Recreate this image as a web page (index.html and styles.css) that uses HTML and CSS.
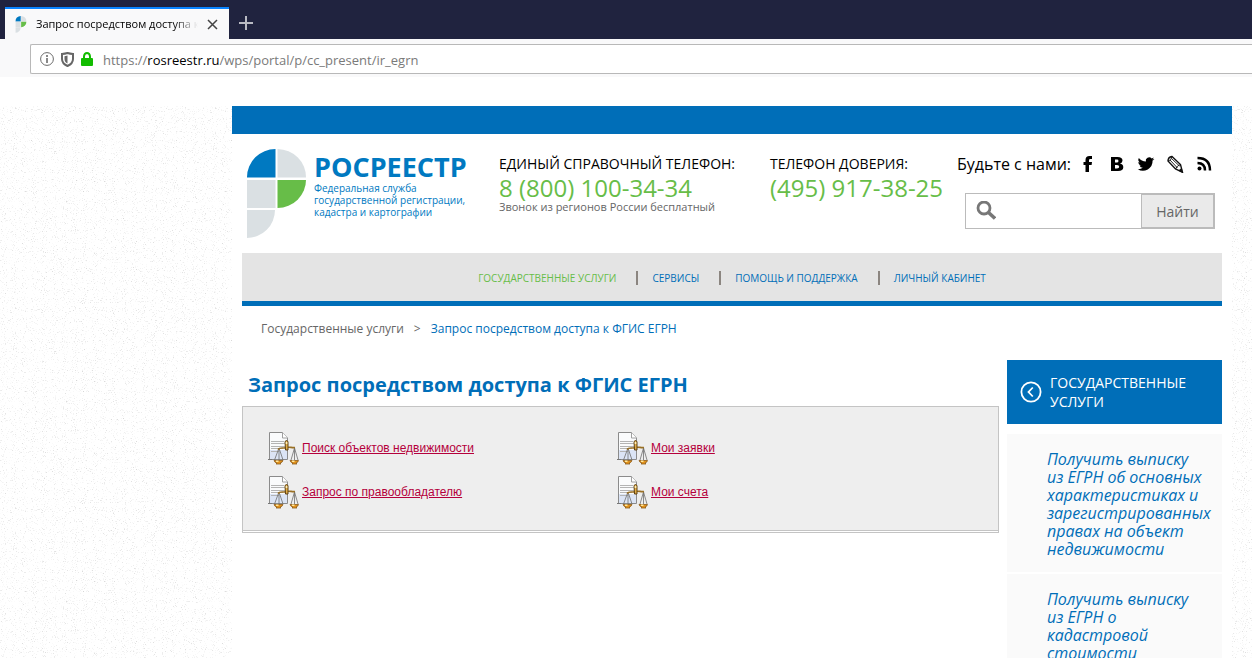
FILE: index.html
```html
<!DOCTYPE html>
<html lang="ru">
<head>
<meta charset="utf-8">
<title>Запрос посредством доступа к ФГИС ЕГРН</title>
<link rel="stylesheet" href="styles.css">
</head>
<body>
<svg class="defs" width="0" height="0" aria-hidden="true">
  <symbol id="doc" viewBox="0 0 32 33">
    <path d="M2.500 .5H15.500L20.500 6V27.500H2.500Z" fill="#fafbfc" stroke="#8b8b8b"/>
    <path d="M3 18H20V27H3Z" fill="#dbe4f5"/>
    <path d="M15.500 .5V6H20.500" fill="#fff" stroke="#a0a0a0"/>
    <path d="M4 9.500H17M4 11.500H18M4 14.500H18M4 16.500H16M4 19.500H12" stroke="#b4b4b4"/>
    <path d="M12 16L7.500 28M12 16L16 28M12 16V28M27.500 16L24 28M27.500 16L31 28M27.500 16V28" fill="none" stroke="#6f6f6f" stroke-width=".8"/>
    <path d="M11 17.500C13 14.500 17 17 20 15.500C22 14.500 25 16 28 15.500" fill="none" stroke="#9a7024" stroke-width="1.600"/>
    <path d="M18 9.500Q19.500 7.500 21 9.500V18H18.500Z" fill="#e0ac45" stroke="#5c4016"/>
    <circle cx="19.500" cy="11" r="1" fill="#fff3c8"/>
    <path d="M1 27.500H5" stroke="#777"/>
    <path d="M7 28.500H16Q15.500 30.500 13 31L14 32H9L10 31Q7.500 30.500 7 28.500ZM23 28.500H31.500Q31 30.500 29 31L30 32H25L26 31Q23.500 30.500 23 28.500Z" fill="#e2921b" stroke="#8a5a1a" stroke-width=".8"/>
    <path d="M9 29.300H11.500M25 29.300H27.500" stroke="#ffe79a" stroke-width="1.400"/>
  </symbol>
  <symbol id="brand" viewBox="0 0 60 90">
    <path d="M0 28.500V28A29 28 0 0 1 28.500 0V28.500Z" fill="#0079c1"/>
    <path d="M30.500 0A29 28 0 0 1 59 28.500H30.500Z" fill="#dae0e3"/>
    <path d="M0 31H28.500V59H0ZM0 61H28A28 28 0 0 1 0 89Z" fill="#dae0e3"/>
    <path d="M30.500 31H59A29 28 0 0 1 30.500 59Z" fill="#67bd48"/>
  </symbol>
</svg>

<div class="tabs">
  <div class="tab">
    <svg class="favicon" viewBox="0 0 60 90" width="12" height="17"><use href="#brand"/></svg>
    <span class="tab-title">Запрос посредством доступа к</span>
    <button class="tab-close" aria-label="Закрыть"><svg width="11" height="11" viewBox="0 0 11 11"><path d="M1 1L10 10M10 1L1 10" stroke="#444" stroke-width="1.500"/></svg></button>
  </div>
  <button class="tab-new" aria-label="Новая вкладка"><svg width="14" height="14" viewBox="0 0 14 14"><path d="M7 0V14M0 7H14" stroke="#b9bac3" stroke-width="2"/></svg></button>
</div>
<div class="toolbar">
  <div class="address">
    <svg width="14" height="14" viewBox="0 0 14 14"><circle cx="7" cy="7" r="6.400" fill="none" stroke="#6b6b6b"/><path d="M7 3V5M7 6V11" stroke="#6b6b6b" stroke-width="1.600"/></svg>
    <svg width="13" height="15" viewBox="0 0 13 15"><path d="M1 2Q4 1.800 6.500 1Q9 1.800 12 2V7Q12 11.500 6.500 14Q1 11.500 1 7Z" fill="none" stroke="#666" stroke-width="2"/><path d="M6.500 3.500V11.500Q3.500 10 3.500 7V4.200Z" fill="#666"/></svg>
    <svg width="12" height="14" viewBox="0 0 12 14"><path d="M3 7V4.500A3 3.500 0 0 1 9 4.500V7" fill="none" stroke="#12bc00" stroke-width="2"/><rect y="6" width="12" height="8" rx="1" fill="#12bc00"/></svg>
    <span class="url">https://<b>rosreestr.ru</b>/wps/portal/p/cc_present/ir_egrn</span>
  </div>
</div>

<div class="canvas">
  <div class="page">
    <div class="strip"></div>
    <header class="header">
      <a class="logo" href="#">
        <svg viewBox="0 0 60 90" width="60" height="90"><use href="#brand"/></svg>
        <span class="logo-text"><strong>РОСРЕЕСТР</strong><small>Федеральная служба<br>государственной регистрации,<br>кадастра и картографии</small></span>
      </a>
      <div class="phone phone-main">
        <div class="phone-label">ЕДИНЫЙ СПРАВОЧНЫЙ ТЕЛЕФОН:</div>
        <div class="phone-number">8 (800) 100-34-34</div>
        <div class="phone-note">Звонок из регионов России бесплатный</div>
      </div>
      <div class="phone phone-trust">
        <div class="phone-label">ТЕЛЕФОН ДОВЕРИЯ:</div>
        <div class="phone-number">(495) 917-38-25</div>
      </div>
      <div class="contact">
        <div class="social">
          <span>Будьте с нами:</span>
          <a href="#" aria-label="Facebook"><svg width="18" height="18" viewBox="0 0 18 18"><path d="M6.500 17V10H4.500V7H6.500V5Q6.500 1 10.500 1H13V4H11.300Q10 4 10 5.300V7H13L12.600 10H10V17Z"/></svg></a>
          <a href="#" aria-label="ВКонтакте"><svg width="18" height="18" viewBox="0 0 18 18"><path fill-rule="evenodd" d="M3 2H9.500Q14.500 2 14.500 5.500Q14.500 7.800 12 8.600Q15.300 9.300 15.300 12.200Q15.300 16 10 16H3ZM7 4.600V7.500H8.800Q10.500 7.500 10.500 6T8.800 4.600ZM7 10.100V13.400H9Q11.200 13.400 11.200 11.800T9 10.100Z"/></svg></a>
          <a href="#" aria-label="Twitter"><svg width="18" height="18" viewBox="-1 0 26 24"><path d="M24 4.600a10 10 0 0 1-2.800.8 5 5 0 0 0 2.100-2.700c-1 .6-2 1-3.100 1.200a4.900 4.900 0 0 0-8.400 4.500C7.700 8.200 4.100 6.300 1.700 3.200a4.900 4.900 0 0 0 1.500 6.500 5 5 0 0 1-2.200-.6 4.900 4.900 0 0 0 3.900 4.900 5 5 0 0 1-2.200.1 4.900 4.900 0 0 0 4.600 3.400A10 10 0 0 1 0 19.500 14 14 0 0 0 21.500 7.100 10 10 0 0 0 24 4.600Z"/></svg></a>
          <a href="#" aria-label="LiveJournal"><svg width="18" height="18" viewBox="0 0 18 18" fill="none" stroke="#111"><path stroke-width="1.400" d="M2 6Q2 2 6 1.500L14.500 9.500L16.500 17.300L9.500 14Z"/><path stroke-width=".9" d="M2 6Q5.500 5.500 6 1.500M4 5L11.500 13M5.500 3.500L13.500 11M9.500 14Q11 10.500 14.500 9.500"/><path d="M13 15.500L16 17L15.500 13.500Z" fill="#111"/></svg></a>
          <a href="#" aria-label="RSS"><svg width="18" height="18" viewBox="0 0 18 18"><circle cx="4.500" cy="13.500" r="2"/><path d="M2.500 8Q10 8 10 15.500M2.500 3Q15 3 15 15.500" fill="none" stroke="#000" stroke-width="2.500"/></svg></a>
        </div>
        <form class="search">
          <svg width="20" height="20" viewBox="0 0 20 20"><circle cx="8" cy="7" r="6" fill="none" stroke="#777" stroke-width="2.800"/><path d="M12.500 11.500L19 17.500" stroke="#777" stroke-width="3.500"/></svg>
          <input type="text" aria-label="Поиск">
          <button type="button">Найти</button>
        </form>
      </div>
    </header>

    <nav class="menu">
      <a class="current" href="#">ГОСУДАРСТВЕННЫЕ УСЛУГИ</a>
      <a href="#">СЕРВИСЫ</a>
      <a href="#">ПОМОЩЬ И ПОДДЕРЖКА</a>
      <a href="#">ЛИЧНЫЙ КАБИНЕТ</a>
    </nav>
    <div class="crumbs"><a href="#">Государственные услуги</a><span>&gt;</span><a class="here" href="#">Запрос посредством доступа к ФГИС ЕГРН</a></div>

    <div class="columns">
      <main class="content">
        <h1>Запрос посредством доступа к ФГИС ЕГРН</h1>
        <div class="panel">
          <div class="services">
            <a href="#"><svg width="32" height="33"><use href="#doc"/></svg><span>Поиск объектов недвижимости</span></a>
            <a href="#"><svg width="32" height="33"><use href="#doc"/></svg><span>Мои заявки</span></a>
            <a href="#"><svg width="32" height="33"><use href="#doc"/></svg><span>Запрос по правообладателю</span></a>
            <a href="#"><svg width="32" height="33"><use href="#doc"/></svg><span>Мои счета</span></a>
          </div>
        </div>
      </main>
      <aside class="side">
        <a class="side-head" href="#">
          <svg width="22" height="22" viewBox="0 0 22 22" fill="none" stroke="#fff" stroke-width="1.800"><circle cx="11" cy="11" r="9.600"/><path d="M12.800 6.500L8.500 11L12.800 15.500"/></svg>
          <span>ГОСУДАРСТВЕННЫЕ УСЛУГИ</span>
        </a>
        <a class="side-item" href="#">Получить выписку<br>из ЕГРН об основных<br>характеристиках и<br>зарегистрированных<br>правах на объект<br>недвижимости</a>
        <a class="side-item" href="#">Получить выписку<br>из ЕГРН о<br>кадастровой<br>стоимости</a>
      </aside>
    </div>
  </div>
</div>
</body>
</html>
```
FILE: styles.css
```css
* { box-sizing: border-box; }
body {
  margin: 0;
  height: 100vh;
  overflow: hidden;
  display: flex;
  flex-direction: column;
  background: #fff;
  color: #000;
  font-family: "Open Sans", "Noto Sans", sans-serif;
  font-size: 14px;
}
a { color: #006eb8; text-decoration: none; }
button { font-family: inherit; border: 0; background: none; padding: 0; }
svg { flex: none; display: block; }
.defs { position: absolute; }

.tabs { display: flex; flex: none; height: 39px; padding: 7px 0 0 5px; background: #20233f; }
.tab { display: flex; align-items: center; width: 224px; padding: 0 11px 0 10px; background: #f9f9fa; border-top: 2px solid #0a84ff; }
.tab-title {
  flex: 1;
  margin: 0 9px;
  padding-bottom: 1px;
  overflow: hidden;
  white-space: nowrap;
  font-size: 11px;
  mask-image: linear-gradient(to right, #000 85%, transparent);
}
.tab-new { margin: 0 10px; }
.toolbar { flex: none; height: 38px; padding: 5px 0 0 30px; background: #f9f9fa; }
.address {
  display: flex;
  align-items: center;
  gap: 7px;
  height: 30px;
  padding-left: 9px;
  background: #fff;
  border: 1px solid #b8b8b8;
  border-right: 0;
  border-radius: 2px 0 0 2px;
}
.url { margin-left: 3px; padding-top: 1px; color: #7a7a7a; font-size: 13px; }
.url b { color: #000; font-weight: 400; }

.canvas {
  flex: 1;
  min-height: 0;
  margin-top: 29px;
  padding: 0 20px 0 232px;
  background: url("data:image/svg+xml,%3Csvg xmlns='http://www.w3.org/2000/svg' width='200' height='200'%3E%3Cfilter id='n' x='0' y='0' width='100%25' height='100%25'%3E%3CfeTurbulence type='fractalNoise' baseFrequency='.9' numOctaves='2' stitchTiles='stitch'/%3E%3CfeColorMatrix values='0 0 0 0 .5 0 0 0 0 .5 0 0 0 0 .5 2 0 0 0 -1.2'/%3E%3C/filter%3E%3Crect width='200' height='200' filter='url(%23n)'/%3E%3C/svg%3E");
}
.page { height: 100%; background: #fff; }
.strip { height: 28px; background: #006eb8; }

.header { display: flex; height: 119px; padding: 15px 17px 0 15px; }
.logo { display: flex; gap: 7px; width: 252px; color: #0079c1; }
.logo-text { display: flex; flex-direction: column; padding-top: 3px; white-space: nowrap; }
.logo-text strong { font-size: 27px; line-height: 30px; }
.logo-text small { font-size: 10px; line-height: 12px; }
.phone { white-space: nowrap; padding-top: 5px; }
.phone-main { width: 271px; }
.phone-trust { width: 187px; }
.phone-label { font-size: 14px; line-height: 20px; }
.phone-number { font-size: 24px; line-height: 27px; color: #67bd48; }
.phone-note { font-size: 11px; line-height: 12px; color: #666; }
.contact { flex: 1; min-width: 0; }
.social { display: flex; align-items: center; gap: 11px; height: 30px; font-size: 16px; white-space: nowrap; }
.social span { margin-right: -3px; }
.search {
  display: flex;
  align-items: center;
  height: 36px;
  margin: 14px 0 0 8px;
  padding-left: 10px;
  background: #fff;
  border: 1px solid #bbb;
}
.search input { flex: 1; min-width: 0; height: 30px; border: 0; outline: 0; font-size: 14px; }
.search button { align-self: stretch; width: 73px; background: #eaeaea; border: 1px solid #bbb; color: #666; font-size: 14px; }

.menu {
  display: flex;
  justify-content: center;
  align-items: center;
  height: 53px;
  margin: 0 10px;
  padding-top: 2px;
  background: #e4e4e4;
  border-bottom: 5px solid #006eb8;
  font-size: 10px;
}
.menu a + a { margin-left: 20px; padding-left: 14px; border-left: 2px solid #8b8580; }
.menu .current { color: #67bd48; }
.crumbs { display: flex; gap: 10px; padding: 13px 29px 0; font-size: 12px; line-height: 20px; color: #666; }
.crumbs a { color: #666; }
.crumbs .here { color: #006eb8; }

.columns { display: flex; gap: 8px; padding: 21px 10px 0; }
.content { flex: 1; min-width: 0; }
h1 { margin: 10px 6px 7px; font-size: 20px; line-height: 29px; font-weight: 700; color: #006eb8; }
.panel { padding-bottom: 1px; border: 1px solid #c4c4c4; }
.services {
  display: grid;
  grid-template-columns: 349px 1fr;
  row-gap: 11px;
  padding: 25px 24px 21px;
  background: #eee;
  border-bottom: 1px solid #c4c4c4;
}
.services a { display: flex; align-items: center; gap: 3px; color: #b5003c; font: 12px/16px "Liberation Sans", Arial, sans-serif; text-decoration: underline; }
.services span { padding-bottom: 2px; }
.side { width: 215px; }
.side-head { display: flex; align-items: center; gap: 8px; height: 64px; margin-bottom: 10px; padding: 0 13px; background: #006eb8; color: #fff; font-size: 14px; line-height: 19px; }
.side-item { display: block; margin-bottom: 2px; padding: 16px 0 14px 40px; background: #fafafa; font-size: 16px; line-height: 18px; font-style: italic; white-space: nowrap; }
```
